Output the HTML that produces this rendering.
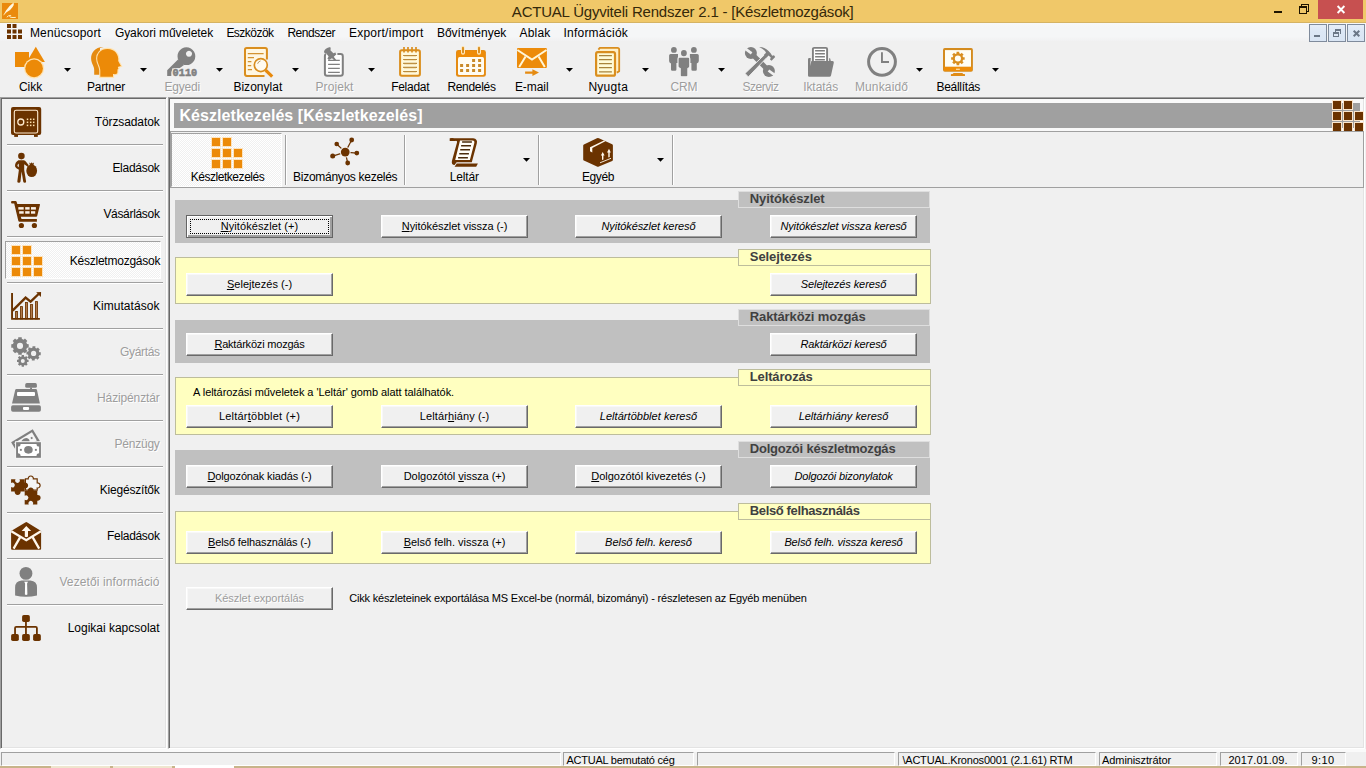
<!DOCTYPE html>
<html lang="hu">
<head>
<meta charset="utf-8">
<title>ACTUAL Ügyviteli Rendszer 2.1 - [Készletmozgások]</title>
<style>
html,body{margin:0;padding:0}
body{width:1366px;height:768px;overflow:hidden;background:#F0F0F0;font-family:"Liberation Sans",sans-serif;position:relative;color:#000}
.sec{position:absolute;left:0;top:0;width:0;height:0}
.sec div,.sec svg,.sec span,.sec button{position:absolute;box-sizing:border-box}
svg{overflow:visible}
.t{white-space:pre}
.dis{color:#9D9D9D;text-shadow:1px 1px 0 #fff}
u{text-decoration:underline;text-underline-offset:1px;text-decoration-thickness:1px}
.sunk2{border:1px solid;border-color:#A0A0A0 #fff #fff #A0A0A0;box-shadow:inset 1px 1px 0 #696969,inset -1px -1px 0 #E3E3E3}
.sunk1{border:1px solid;border-color:#A0A0A0 #fff #fff #A0A0A0}
.btn{background:#F0F0F0;border:1px solid;border-color:#fff #696969 #696969 #fff;box-shadow:inset -1px -1px 0 #A0A0A0,inset 1px 1px 0 #F8F8F8}
.btn.def{border-color:#646464;box-shadow:inset 1px 1px 0 #fff,inset -1px -1px 0 #A0A0A0,inset -2px -2px 0 #A0A0A0}
.gg{background:#C0C0C0}
.gy{background:#FFFFC0;border:1px solid #BDBD9C}
.gt{background:#C0C0C0;border:1px solid #DEDEDE}
.gty{background:#FFFFC0;border:1px solid #BDBD9C}
.chk{background-color:#fff;background-image:linear-gradient(45deg,#F0F0F0 25%,transparent 25%,transparent 75%,#F0F0F0 75%),linear-gradient(45deg,#F0F0F0 25%,transparent 25%,transparent 75%,#F0F0F0 75%);background-size:2px 2px;background-position:0 0,1px 1px}
.vsep{width:2px;border-left:1px solid #A0A0A0;border-right:1px solid #fff}
.hsep{height:2px;border-top:1px solid #A0A0A0;border-bottom:1px solid #fff}
.mdi{background:linear-gradient(#E6EEF8,#DCE7F5 40%,#D9E5F4);border:1px solid #7F8B9C}
</style>
</head>
<body>
<header id="titlebar" class="sec">
<div style="left:0px;top:0px;width:1366px;height:22px;background:#F0C869"></div>
<div style="left:0px;top:22px;width:1366px;height:1px;background:#D5B363"></div>
<svg style="left:2px;top:3px" width="16" height="16" viewBox="0 0 16 16" ><rect width="16" height="16" fill="#EA8A0C"/><path d="M1.8 11.4 L4 7.4 Q7.6 2.6 11.6 -0.4 Q12.4 1.6 10.6 4 Q8.4 7.6 4.6 9.2 Z" fill="#FFF8E0"/><path d="M1.6 12.2 L3.4 9.8" stroke="#FFE9A8" stroke-width="0.8"/><path d="M4.8 14.2 Q6.4 12.2 8.8 12.4 Q7.2 13.6 8.2 14.2 Q11 14.8 13.8 14.4" fill="none" stroke="#FFF0C0" stroke-width="1"/></svg>
<span class="t" style="left:511.85px;top:3px;font-size:15px;line-height:17px;color:#35290A;letter-spacing:-0.212px;">ACTUAL Ügyviteli Rendszer 2.1 - [Készletmozgások]</span>
<div style="left:1274px;top:11px;width:8px;height:2px;background:#1E1400"></div>
<svg style="left:1299px;top:4px" width="10" height="10" viewBox="0 0 10 10" ><g fill="#1E1400" shape-rendering="crispEdges"><rect x="2" y="0" width="8" height="1"/><rect x="2" y="0" width="1" height="2"/><rect x="9" y="0" width="1" height="8"/><rect x="8" y="7" width="2" height="1"/><rect x="0" y="2" width="8" height="2"/><rect x="0" y="2" width="1" height="8"/><rect x="7" y="2" width="1" height="8"/><rect x="0" y="9" width="8" height="1"/></g></svg>
<div style="left:1318px;top:0px;width:45px;height:19px;background:#C75050"></div>
<svg style="left:1337px;top:6px" width="8" height="7" viewBox="0 0 8 7" ><path d="M0.6 0L7.4 7M7.4 0L0.6 7" stroke="#fff" stroke-width="1.9"/></svg>
</header>
<nav id="menubar" class="sec">
<div style="left:0px;top:23px;width:1366px;height:18px;background:linear-gradient(#F7F8F9,#F5F6F7 30%,#F5F6F7 75%,#F1F1F2)"></div>
<svg style="left:7px;top:24px" width="16" height="16" viewBox="0 0 16 16" ><rect x="0" y="0" width="4" height="4" fill="#6B3300"/><rect x="5.5" y="0" width="4" height="4" fill="#6B3300"/><rect x="0" y="5.5" width="4" height="4" fill="#6B3300"/><rect x="5.5" y="5.5" width="4" height="4" fill="#6B3300"/><rect x="11" y="5.5" width="4" height="4" fill="#6B3300"/><rect x="0" y="11" width="4" height="4" fill="#6B3300"/><rect x="5.5" y="11" width="4" height="4" fill="#6B3300"/><rect x="11" y="11" width="4" height="4" fill="#6B3300"/></svg>
<span class="t" style="left:29.90px;top:26px;font-size:12px;line-height:14px;letter-spacing:0.166px;">Menücsoport</span>
<span class="t" style="left:114.90px;top:26px;font-size:12px;line-height:14px;letter-spacing:-0.069px;">Gyakori műveletek</span>
<span class="t" style="left:226.40px;top:26px;font-size:12px;line-height:14px;letter-spacing:-0.520px;">Eszközök</span>
<span class="t" style="left:287.40px;top:26px;font-size:12px;line-height:14px;letter-spacing:-0.457px;">Rendszer</span>
<span class="t" style="left:348.90px;top:26px;font-size:12px;line-height:14px;letter-spacing:0.257px;">Export/import</span>
<span class="t" style="left:436.90px;top:26px;font-size:12px;line-height:14px;letter-spacing:0.007px;">Bővítmények</span>
<span class="t" style="left:519.40px;top:26px;font-size:12px;line-height:14px;letter-spacing:0.234px;">Ablak</span>
<span class="t" style="left:563.40px;top:26px;font-size:12px;line-height:14px;letter-spacing:0.243px;">Információk</span>
<div class="mdi" style="left:1309px;top:24px;width:18px;height:18px;"></div>
<div class="mdi" style="left:1328px;top:24px;width:18px;height:18px;"></div>
<div class="mdi" style="left:1347px;top:24px;width:18px;height:18px;"></div>
<div style="left:1314px;top:35px;width:6px;height:2px;background:#6B7787"></div>
<svg style="left:1333px;top:29px" width="8" height="8" viewBox="0 0 8 8" ><g fill="#6B7787" shape-rendering="crispEdges"><rect x="2" y="0" width="6" height="2"/><rect x="7" y="0" width="1" height="5"/><rect x="2" y="0" width="1" height="3"/><rect x="0" y="3" width="6" height="2"/><rect x="0" y="3" width="1" height="5"/><rect x="5" y="3" width="1" height="5"/><rect x="0" y="7" width="6" height="1"/></g></svg>
<svg style="left:1353px;top:30px" width="7" height="7" viewBox="0 0 7 7" ><path d="M0.7 0.7L6.3 6.3M6.3 0.7L0.7 6.3" stroke="#6B7787" stroke-width="2"/></svg>
</nav>
<div id="toolbar" class="sec">
<div class="tbtn" style="left:0px;top:42px;width:76px;height:54px;">
<svg style="left:15px;top:4px" width="32" height="32" viewBox="0 0 32 32" ><rect x="0" y="6" width="14" height="15" fill="#EC8A08"/>
<path d="M20.8 0.8 L29.9 16 L11.7 16 Z" fill="#EC8A08"/>
<circle cx="19.1" cy="22.4" r="10.1" fill="#FFE3B0"/><circle cx="19.1" cy="22.4" r="8.8" fill="#EC8A08"/></svg>
<span class="t" style="left:18.90px;top:38px;font-size:12px;line-height:14px;letter-spacing:0.027px;">Cikk</span>
<svg style="left:64px;top:26px" width="7" height="4" viewBox="0 0 7 4" ><path d="M0 0H7L3.5 3.8Z" fill="#000"/></svg>
</div>
<div class="tbtn" style="left:76px;top:42px;width:76px;height:54px;">
<svg style="left:15px;top:4px" width="32" height="32" viewBox="0 0 32 32" ><path d="M12.6 1 C4 0.8 0 7 0.1 12.5 C0.3 18 3.2 20 3.2 24 V28.7 H9 V2 Z" fill="#E58B12"/>
<path d="M16.5 2.9 C9.5 2.9 6.2 8 6.2 12.5 C6.2 17.5 9.3 20 9.3 24.5 V30.8 H22 V28 C23.5 28.2 26 28.6 26.3 26.8 L26.5 23.6 L27.4 22.6 L26.8 21.6 L27.2 20.8 L29.9 20 L27.2 15 C28.2 8.5 23.5 2.9 16.5 2.9 Z" fill="#EC8A08" stroke="#FFE3B0" stroke-width="2.2" paint-order="stroke"/></svg>
<span class="t" style="left:10.90px;top:38px;font-size:12px;line-height:14px;letter-spacing:-0.166px;">Partner</span>
<svg style="left:64px;top:26px" width="7" height="4" viewBox="0 0 7 4" ><path d="M0 0H7L3.5 3.8Z" fill="#000"/></svg>
</div>
<div class="tbtn" style="left:152px;top:42px;width:76px;height:54px;">
<svg style="left:15px;top:4px" width="32" height="32" viewBox="0 0 32 32" ><path d="M11 13.5 L0.2 24.3 V29.9 H4.3 V26.5 Q4.6 22.4 9 22.2 H12.5 L17 19 Z" fill="#808080"/>
<path d="M19.4 1.3 a8.9 8.9 0 1 0 0.01 0 Z M22 4.75 a3.05 3.05 0 1 1 -0.01 0 Z" fill="#808080" fill-rule="evenodd"/>
<rect x="5.2" y="22.4" width="26" height="8" fill="#F0F0F0"/>
<text x="5.6" y="29.9" font-family="Liberation Mono, monospace" font-weight="bold" font-size="10.4" fill="#808080" stroke="#808080" stroke-width="0.55" textLength="24.6" lengthAdjust="spacingAndGlyphs">0110</text></svg>
<span class="t dis" style="left:12.40px;top:38px;font-size:12px;line-height:14px;letter-spacing:-0.167px;">Egyedi</span>
<svg style="left:64px;top:26px" width="7" height="4" viewBox="0 0 7 4" ><path d="M0 0H7L3.5 3.8Z" fill="#000"/></svg>
</div>
<div class="tbtn" style="left:228px;top:42px;width:76px;height:54px;">
<svg style="left:15px;top:4px" width="32" height="32" viewBox="0 0 32 32" ><rect x="0.9" y="0.8" width="24.1" height="30.2" rx="2.6" fill="#FDE7C4"/>
<rect x="2" y="1.9" width="21.9" height="28" rx="1.8" fill="#FFF7E2" stroke="#D98E1F" stroke-width="2"/>
<rect x="23" y="13.5" width="3" height="18" fill="#F0F0F0"/><rect x="21.5" y="27.5" width="4" height="4" fill="#F0F0F0"/>
<g stroke="#D39331" stroke-width="1.3"><path d="M4.8 7.6H20.6M4.8 11.6H11M4.8 15.6H8.4M4.8 19.6H8.2M4.8 23.6H9"/></g>
<circle cx="17.8" cy="19.1" r="6.5" fill="#FFFBF0" stroke="#D98E1F" stroke-width="1.7"/>
<path d="M14.6 17.8 Q15.3 15.4 17.6 14.9" fill="none" stroke="#9A7A3A" stroke-width="0.7"/>
<path d="M22.6 24.2 L29.2 30.6" stroke="#E8890C" stroke-width="3.2" stroke-linecap="butt"/></svg>
<span class="t" style="left:5.40px;top:38px;font-size:12px;line-height:14px;letter-spacing:0.027px;">Bizonylat</span>
<svg style="left:64px;top:26px" width="7" height="4" viewBox="0 0 7 4" ><path d="M0 0H7L3.5 3.8Z" fill="#000"/></svg>
</div>
<div class="tbtn" style="left:304px;top:42px;width:76px;height:54px;">
<svg style="left:15px;top:4px" width="32" height="32" viewBox="0 0 32 32" ><rect x="5.9" y="8.1" width="17.9" height="21.7" rx="2.2" fill="#fff" stroke="#808080" stroke-width="2"/>
<rect x="7.2" y="6" width="11.2" height="3.6" fill="#F0F0F0"/><rect x="7" y="9" width="12" height="3" fill="#fff"/>
<g stroke="#808080" stroke-width="1.3"><path d="M9.1 14.4H20.8M9.1 18.3H20.8M9.1 22.3H20.8M9.1 26.3H20.8"/></g>
<path d="M5 5.4 Q5.8 2.2 11.2 0.9 Q12.2 2.6 11.4 4.2 L14.4 7.2 L16.4 6.6 L17.2 8.4 L14.8 10.8 L17.2 14 L16 15 L13 12.2 L10 14 L8.4 12.6 L9.6 10.4 L7.2 7.2 Q5.2 7.8 5 5.4 Z" fill="#808080"/></svg>
<span class="t dis" style="left:11.40px;top:38px;font-size:12px;line-height:14px;letter-spacing:0.120px;">Projekt</span>
<svg style="left:64px;top:26px" width="7" height="4" viewBox="0 0 7 4" ><path d="M0 0H7L3.5 3.8Z" fill="#000"/></svg>
</div>
<div class="tbtn" style="left:380px;top:42px;width:61px;height:54px;">
<svg style="left:15px;top:4px" width="32" height="32" viewBox="0 0 32 32" ><rect x="4.1" y="3.2" width="21.8" height="27.6" rx="2.6" fill="#FDE7C4"/>
<rect x="5.1" y="4.2" width="19.8" height="25.6" rx="1.8" fill="#FFF9DC" stroke="#D98E1F" stroke-width="2"/>
<g stroke="#D98E1F" stroke-width="1.7"><path d="M9 1V6.6M13 1V6.6M17 1V6.6M21 1V6.6"/></g>
<g stroke="#B98A3C" stroke-width="1.1"><path d="M8.1 9.5H22M8.1 13.5H22M8.1 17.4H22M8.1 21.4H22M8.1 25.5H22"/></g>
<g stroke="#F3DCA8" stroke-width="0.8"><path d="M9 10.5H21M9 14.5H21M9 18.4H21M9 22.4H21M9 26.5H21"/></g></svg>
<span class="t" style="left:11.15px;top:38px;font-size:12px;line-height:14px;letter-spacing:-0.262px;">Feladat</span>
</div>
<div class="tbtn" style="left:441px;top:42px;width:61px;height:54px;">
<svg style="left:15px;top:4px" width="32" height="32" viewBox="0 0 32 32" ><rect x="0" y="3.9" width="29.9" height="26.9" rx="2.4" fill="#E58B12"/>
<rect x="1" y="4.9" width="27.9" height="7" rx="1.5" fill="#EE8C08"/>
<rect x="2" y="11.1" width="26" height="17.9" rx="1.6" fill="#FFFCF2"/>
<g fill="#C98A28"><rect x="16.1" y="13" width="3" height="3"/><rect x="22.1" y="13" width="3" height="3"/><rect x="4.1" y="18" width="3" height="3"/><rect x="10.1" y="18" width="3" height="3"/><rect x="16.1" y="18" width="3" height="3"/><rect x="22.1" y="18" width="3" height="3"/><rect x="4.1" y="23" width="3" height="3"/><rect x="10.1" y="23" width="3" height="3"/><rect x="16.1" y="23" width="3" height="3"/><rect x="22.1" y="23" width="3" height="3"/></g>
<g stroke="#FFE9BE" stroke-width="4" stroke-linecap="round"><path d="M7 2V6.8M23 2V6.8"/></g>
<g stroke="#D98E1F" stroke-width="1.9" stroke-linecap="round"><path d="M7 1.8V6.4M23 1.8V6.4"/></g></svg>
<span class="t" style="left:6.40px;top:38px;font-size:12px;line-height:14px;letter-spacing:-0.313px;">Rendelés</span>
</div>
<div class="tbtn" style="left:502px;top:42px;width:76px;height:54px;">
<svg style="left:15px;top:4px" width="32" height="32" viewBox="0 0 32 32" ><rect x="0" y="2" width="29.9" height="19.9" rx="1" fill="#EC8B0A"/>
<path d="M0.4 4 L15 13.6 L29.5 4" fill="none" stroke="#FFF6D8" stroke-width="2"/>
<path d="M2.2 21 L8.6 10.4 M27.8 21 L21.6 10.4" stroke="#FFF6D8" stroke-width="2"/>
<path d="M8.1 25.4 H15.4 V23.3 L22 26.6 L15.4 29.9 V27.8 H8.1 Z" fill="#E58B12"/></svg>
<span class="t" style="left:12.90px;top:38px;font-size:12px;line-height:14px;letter-spacing:-0.053px;">E-mail</span>
<svg style="left:64px;top:26px" width="7" height="4" viewBox="0 0 7 4" ><path d="M0 0H7L3.5 3.8Z" fill="#000"/></svg>
</div>
<div class="tbtn" style="left:578px;top:42px;width:76px;height:54px;">
<svg style="left:15px;top:4px" width="32" height="32" viewBox="0 0 32 32" ><path d="M4.6 5 L6.8 1.9 H24.4 Q26.2 1.9 26.2 3.7 V25.2 L22.6 27.4 V5 Z" fill="#FFEFC6"/>
<path d="M5.4 3.6 L6.8 1.9 H24.4 Q26.2 1.9 26.2 3.7 V25.2 L23.8 26.6" fill="none" stroke="#D98E1F" stroke-width="1.8" stroke-linejoin="round"/>
<rect x="2" y="5" width="21.1" height="25.8" rx="2.6" fill="#FDE7C4"/>
<rect x="3.1" y="6.1" width="18.9" height="23.6" rx="1.8" fill="#FFFBD8" stroke="#D98E1F" stroke-width="2.2"/>
<g stroke="#A8843C" stroke-width="1.3"><path d="M6 9.7H18.9M6 13.7H18.9M6 17.7H18.9M6 21.7H18.9M6 25.8H18.9"/></g></svg>
<span class="t" style="left:10.40px;top:38px;font-size:12px;line-height:14px;letter-spacing:0.278px;">Nyugta</span>
<svg style="left:64px;top:26px" width="7" height="4" viewBox="0 0 7 4" ><path d="M0 0H7L3.5 3.8Z" fill="#000"/></svg>
</div>
<div class="tbtn" style="left:654px;top:42px;width:76px;height:54px;">
<svg style="left:15px;top:4px" width="32" height="32" viewBox="0 0 32 32" ><g fill="#808080"><circle cx="4.9" cy="3.9" r="2.9"/><path d="M1.6 8.1 H9 V17 H7.4 V23.4 Q7.4 24.7 6.1 24.7 H3.3 Q2 24.7 2 23.4 V17.6 Q0.1 16.6 0.1 15 V9.6 Q0.1 8.1 1.6 8.1 Z"/>
<circle cx="24.9" cy="3.9" r="2.9"/><path d="M28.3 8.1 H20.9 V17 H22.4 V23.4 Q22.4 24.7 23.7 24.7 H26.5 Q27.8 24.7 27.8 23.4 V17.6 Q29.8 16.6 29.8 15 V9.6 Q29.8 8.1 28.3 8.1 Z"/></g>
<g fill="#808080" stroke="#F0F0F0" stroke-width="1.2"><path d="M10.6 11.1 H19.2 Q20.8 11.1 20.8 12.7 V20.6 Q20.8 22 18.9 22.6 V29.4 Q18.9 30.8 17.5 30.8 H12.6 Q11.2 30.8 11.2 29.4 V22.6 Q9 22 9 20.6 V12.7 Q9 11.1 10.6 11.1 Z"/></g>
<ellipse cx="14.9" cy="7.1" rx="2.9" ry="3.2" fill="#808080"/></svg>
<span class="t dis" style="left:16.40px;top:38px;font-size:12px;line-height:14px;letter-spacing:-0.126px;">CRM</span>
<svg style="left:64px;top:26px" width="7" height="4" viewBox="0 0 7 4" ><path d="M0 0H7L3.5 3.8Z" fill="#000"/></svg>
</div>
<div class="tbtn" style="left:730px;top:42px;width:61px;height:54px;">
<svg style="left:15px;top:4px" width="32" height="32" viewBox="0 0 32 32" ><path d="M7 8 L24 25" stroke="#808080" stroke-width="4.8"/>
<circle cx="5.9" cy="6.9" r="6" fill="#808080"/><circle cx="23.9" cy="25.1" r="6" fill="#808080"/>
<path d="M-0.5 2.2 L6.6 7.4" stroke="#F0F0F0" stroke-width="2.7"/><path d="M23.5 24.5 L30.5 29.6" stroke="#F0F0F0" stroke-width="2.7"/>
<path d="M0 27.4 L3.3 30.9 L22.2 11.2 L19.6 8.6 Z" fill="#808080" stroke="#F0F0F0" stroke-width="0.9"/>
<path d="M14.2 1 Q20.4 0.6 25.6 7.2 L27.2 9.8 L29 9.2 L30.2 11 L26.6 14.7 L25 13.4 L25.8 11.6 L23.6 9.6 L21.6 11.6 L19 8.8 L21 6.8 Q19.4 3.4 14.2 1 Z" fill="#808080"/></svg>
<span class="t dis" style="left:12.40px;top:38px;font-size:12px;line-height:14px;letter-spacing:-0.449px;">Szerviz</span>
</div>
<div class="tbtn" style="left:791px;top:42px;width:61px;height:54px;">
<svg style="left:15px;top:4px" width="32" height="32" viewBox="0 0 32 32" ><rect x="6.9" y="1.9" width="14.2" height="16" rx="1.2" fill="#fff" stroke="#808080" stroke-width="1.9"/>
<g stroke="#808080" stroke-width="1.5"><path d="M9.1 4.8H18.9M9.1 7.8H18.9M9.1 10.8H18.9M9.1 13.7H18.9"/></g>
<path d="M2 13.4 Q2 12.1 3.3 12.1 H4.8 L4 20 L5.4 15.1 H26.4 Q28.2 15.1 27.8 16.8 L25 29.6 Q24.7 30.8 23.4 30.8 H3.4 Q2 30.8 2 29.4 Z" fill="#808080"/>
<path d="M23.1 15.3 V12.6 L24 12 L24.9 15.3 Z" fill="#808080"/></svg>
<span class="t dis" style="left:12.15px;top:38px;font-size:12px;line-height:14px;letter-spacing:-0.058px;">Iktatás</span>
</div>
<div class="tbtn" style="left:852px;top:42px;width:76px;height:54px;">
<svg style="left:15px;top:4px" width="32" height="32" viewBox="0 0 32 32" ><circle cx="15" cy="15.85" r="13.4" fill="none" stroke="#808080" stroke-width="3"/>
<path d="M14.95 6.2 V16.05 H22" fill="none" stroke="#808080" stroke-width="1.9"/></svg>
<span class="t dis" style="left:2.90px;top:38px;font-size:12px;line-height:14px;letter-spacing:0.146px;">Munkaidő</span>
<svg style="left:64px;top:26px" width="7" height="4" viewBox="0 0 7 4" ><path d="M0 0H7L3.5 3.8Z" fill="#000"/></svg>
</div>
<div class="tbtn" style="left:928px;top:42px;width:76px;height:54px;">
<svg style="left:15px;top:4px" width="32" height="32" viewBox="0 0 32 32" ><rect x="0" y="2.1" width="29.9" height="23.6" rx="1.8" fill="#D48B1E"/>
<rect x="1" y="20.7" width="27.9" height="4.2" fill="#EE8C08"/>
<rect x="2" y="4.1" width="26" height="16.6" fill="#FFFDF4"/>
<rect x="13" y="22.7" width="3.8" height="1.1" fill="#FFE9BE"/>
<path d="M10.6 27 H19.3 L20.2 28 H21.4 Q22 28 22 28.6 V29.9 H7.9 V28.6 Q7.9 28 8.5 28 H9.7 Z" fill="#E08C17"/>
<path d="M19.49 15.15 L20.65 16.32 L18.75 18.23 L17.57 17.08 A5.30 5.30 0 0 1 16.27 17.62 L16.26 19.26 L13.57 19.27 L13.56 17.63 A5.30 5.30 0 0 1 12.25 17.09 L11.08 18.25 L9.17 16.35 L10.32 15.17 A5.30 5.30 0 0 1 9.78 13.87 L8.14 13.86 L8.13 11.17 L9.77 11.16 A5.30 5.30 0 0 1 10.31 9.85 L9.15 8.68 L11.05 6.77 L12.23 7.92 A5.30 5.30 0 0 1 13.53 7.38 L13.54 5.74 L16.23 5.73 L16.24 7.37 A5.30 5.30 0 0 1 17.55 7.91 L18.72 6.75 L20.63 8.65 L19.48 9.83 A5.30 5.30 0 0 1 20.02 11.13 L21.66 11.14 L21.67 13.83 L20.03 13.84 A5.30 5.30 0 0 1 19.49 15.15 Z M11.85 12.50 a3.05 3.05 0 1 0 6.10 0 a3.05 3.05 0 1 0 -6.10 0 Z" fill="#D98E1F" fill-rule="evenodd"/></svg>
<span class="t" style="left:8.40px;top:38px;font-size:12px;line-height:14px;letter-spacing:-0.259px;">Beállítás</span>
<svg style="left:64px;top:26px" width="7" height="4" viewBox="0 0 7 4" ><path d="M0 0H7L3.5 3.8Z" fill="#000"/></svg>
</div>
</div>
<aside id="sidebar" class="sec">
<div class="sunk2" style="left:0px;top:97px;width:167px;height:652px;"></div>
<div class="sitem" style="left:5px;top:102px;width:157px;height:38px;">
<svg style="left:6px;top:5px" width="32" height="32" viewBox="0 0 32 32" ><rect x="0" y="0" width="30.2" height="28" rx="2" fill="#6B3300"/><rect x="3.2" y="27" width="3.8" height="2.9" fill="#6B3300"/><rect x="23" y="27" width="3.8" height="2.9" fill="#6B3300"/>
<rect x="3.3" y="3.2" width="23.4" height="22.8" rx="1.8" fill="none" stroke="#FFEBCF" stroke-width="1.1"/>
<circle cx="9.8" cy="15" r="3" fill="none" stroke="#FFEBCF" stroke-width="1.3"/>
<g fill="#FFE3B0"><rect x="15.75" y="11.55" width="1.5" height="1.5"/><rect x="18.95" y="11.55" width="1.5" height="1.5"/><rect x="21.95" y="11.55" width="1.5" height="1.5"/><rect x="15.75" y="14.55" width="1.5" height="1.5"/><rect x="18.95" y="14.55" width="1.5" height="1.5"/><rect x="21.95" y="14.55" width="1.5" height="1.5"/><rect x="15.75" y="17.65" width="1.5" height="1.5"/><rect x="18.95" y="17.65" width="1.5" height="1.5"/><rect x="21.95" y="17.65" width="1.5" height="1.5"/></g></svg>
<span class="t" style="left:89.80px;top:13px;font-size:12px;line-height:14px;letter-spacing:-0.112px;">Törzsadatok</span>
</div>
<div class="hsep" style="left:7px;top:144px;width:156px;height:2px;"></div>
<div class="sitem" style="left:5px;top:148px;width:157px;height:38px;">
<svg style="left:6px;top:5px" width="32" height="32" viewBox="0 0 32 32" ><g fill="#6B3300"><circle cx="10.4" cy="3.1" r="3.3"/>
<path d="M7.4 7.2 H12.8 Q14.2 7.4 15 8.8 L17.8 12.2 L16.8 13.8 L13.2 11.2 V17 L15.1 28.6 Q15.2 29.8 13.7 29.8 Q12.5 29.8 12.2 28.6 L10.6 18.6 L9.5 28.6 Q9.3 29.8 7.9 29.8 Q6.3 29.8 6.3 28.6 L7.9 16.8 Q4.6 15.6 4 13.2 Q3.8 9.4 7.4 7.2 Z M7.8 10.4 Q6.2 11.8 6.4 13 L7.8 14.2 Z" fill-rule="evenodd"/>
<ellipse cx="20.7" cy="17.7" rx="5.4" ry="6.3"/><path d="M18.2 9.4 L19.8 10.6 L20.7 9.2 L21.6 10.6 L23 9.4 L22.4 12.4 H19 Z"/></g></svg>
<span class="t" style="left:107.40px;top:13px;font-size:12px;line-height:14px;letter-spacing:-0.272px;">Eladások</span>
</div>
<div class="hsep" style="left:7px;top:190px;width:156px;height:2px;"></div>
<div class="sitem" style="left:5px;top:194px;width:157px;height:38px;">
<svg style="left:6px;top:5px" width="32" height="32" viewBox="0 0 32 32" ><path d="M0.1 3 Q0.1 2.1 1 2.1 H4.6 Q5.4 2.1 5.7 3 L6.3 4.9 H28.3 Q29.2 4.9 29 5.8 L26.2 17 Q26 17.7 25.2 17.7 H9.8 L10.5 20.1 H25.9 V22.7 H8.4 Q7.6 22.7 7.3 21.8 L3.2 4.5 H1 Q0.1 4.5 0.1 3.6 Z" fill="#6B3300"/>
<g fill="#FBF1E6"><rect x="7.3" y="8.1" width="5.4" height="2.5"/><rect x="14.2" y="8.1" width="4.4" height="2.5"/><rect x="20" y="8.1" width="4.9" height="2.5"/>
<rect x="8.2" y="12.2" width="4.5" height="2.5"/><rect x="14.2" y="12.2" width="4.4" height="2.5"/><rect x="20" y="12.2" width="4.2" height="2.5"/></g>
<circle cx="10.4" cy="26.5" r="2.6" fill="#6B3300"/><circle cx="23.4" cy="26.5" r="2.6" fill="#6B3300"/></svg>
<span class="t" style="left:98.40px;top:13px;font-size:12px;line-height:14px;letter-spacing:-0.317px;">Vásárlások</span>
</div>
<div class="hsep" style="left:7px;top:236px;width:156px;height:2px;"></div>
<div class="sunk1 chk" style="left:5px;top:241px;width:156px;height:38px;">
<svg style="left:5px;top:3px" width="32" height="32" viewBox="0 0 32 32" ><rect x="0" y="0" width="10" height="10" fill="#FDE3BD"/><rect x="1" y="1" width="8" height="8" fill="#EC8A08"/><rect x="11" y="0" width="10" height="10" fill="#FDE3BD"/><rect x="12" y="1" width="8" height="8" fill="#EC8A08"/><rect x="0" y="11" width="10" height="10" fill="#FDE3BD"/><rect x="1" y="12" width="8" height="8" fill="#EC8A08"/><rect x="11" y="11" width="10" height="10" fill="#FDE3BD"/><rect x="12" y="12" width="8" height="8" fill="#EC8A08"/><rect x="22" y="11" width="10" height="10" fill="#FDE3BD"/><rect x="23" y="12" width="8" height="8" fill="#EC8A08"/><rect x="0" y="22" width="10" height="10" fill="#FDE3BD"/><rect x="1" y="23" width="8" height="8" fill="#EC8A08"/><rect x="11" y="22" width="10" height="10" fill="#FDE3BD"/><rect x="12" y="23" width="8" height="8" fill="#EC8A08"/><rect x="22" y="22" width="10" height="10" fill="#FDE3BD"/><rect x="23" y="23" width="8" height="8" fill="#EC8A08"/></svg>
<span class="t" style="left:63.80px;top:12px;font-size:12px;line-height:14px;letter-spacing:-0.243px;">Készletmozgások</span>
</div>
<div class="hsep" style="left:7px;top:282px;width:156px;height:2px;"></div>
<div class="sitem" style="left:5px;top:286px;width:157px;height:38px;">
<svg style="left:6px;top:5px" width="32" height="32" viewBox="0 0 32 32" ><g fill="#B27B4C" stroke="#6B3300" stroke-width="0.85"><rect x="4.6" y="20.5" width="1.9" height="7.4"/><rect x="9.5" y="15.6" width="2" height="12.3"/><rect x="14.5" y="11.5" width="2" height="16.4"/><rect x="19.5" y="13.6" width="2.1" height="14.3"/><rect x="24.5" y="10.6" width="2" height="17.3"/></g>
<path d="M1.05 2.1 V27.85 H28.9" fill="none" stroke="#6B3300" stroke-width="1.9"/>
<path d="M1.6 19.6 L14.6 6.6 L19.6 10.6 L27.6 3" fill="none" stroke="#6B3300" stroke-width="2.4" stroke-linejoin="miter"/>
<path d="M25.2 1.2 L30.1 0.9 L29.9 5.9 Z" fill="#6B3300"/></svg>
<span class="t" style="left:87.90px;top:13px;font-size:12px;line-height:14px;letter-spacing:0.061px;">Kimutatások</span>
</div>
<div class="hsep" style="left:7px;top:328px;width:156px;height:2px;"></div>
<div class="sitem" style="left:5px;top:332px;width:157px;height:38px;">
<svg style="left:6px;top:5px" width="32" height="32" viewBox="0 0 32 32" ><path d="M7.15 1.94 L7.26 0.17 L10.74 0.17 L10.85 1.94 A7.20 7.20 0 0 1 12.62 2.67 L13.94 1.50 L16.40 3.96 L15.23 5.28 A7.20 7.20 0 0 1 15.96 7.05 L17.73 7.16 L17.73 10.64 L15.96 10.75 A7.20 7.20 0 0 1 15.23 12.52 L16.40 13.84 L13.94 16.30 L12.62 15.13 A7.20 7.20 0 0 1 10.85 15.86 L10.74 17.63 L7.26 17.63 L7.15 15.86 A7.20 7.20 0 0 1 5.38 15.13 L4.06 16.30 L1.60 13.84 L2.77 12.52 A7.20 7.20 0 0 1 2.04 10.75 L0.27 10.64 L0.27 7.16 L2.04 7.05 A7.20 7.20 0 0 1 2.77 5.28 L1.60 3.96 L4.06 1.50 L5.38 2.67 A7.20 7.20 0 0 1 7.15 1.94 Z M5.95 8.90 a3.05 3.05 0 1 0 6.10 0 a3.05 3.05 0 1 0 -6.10 0 Z" fill="#808080" fill-rule="evenodd"/><path d="M21.40 10.73 L21.54 9.18 L24.38 9.32 L24.36 10.88 A5.80 5.80 0 0 1 25.76 11.54 L26.95 10.54 L28.86 12.65 L27.75 13.74 A5.80 5.80 0 0 1 28.27 15.20 L29.82 15.34 L29.68 18.18 L28.12 18.16 A5.80 5.80 0 0 1 27.46 19.56 L28.46 20.75 L26.35 22.66 L25.26 21.55 A5.80 5.80 0 0 1 23.80 22.07 L23.66 23.62 L20.82 23.48 L20.84 21.92 A5.80 5.80 0 0 1 19.44 21.26 L18.25 22.26 L16.34 20.15 L17.45 19.06 A5.80 5.80 0 0 1 16.93 17.60 L15.38 17.46 L15.52 14.62 L17.08 14.64 A5.80 5.80 0 0 1 17.74 13.24 L16.74 12.05 L18.85 10.14 L19.94 11.25 A5.80 5.80 0 0 1 21.40 10.73 Z M20.00 16.40 a2.60 2.60 0 1 0 5.20 0 a2.60 2.60 0 1 0 -5.20 0 Z" fill="#808080" fill-rule="evenodd"/><path d="M10.62 19.45 L10.65 18.11 L12.95 18.11 L12.98 19.45 A4.60 4.60 0 0 1 14.11 19.92 L15.08 18.99 L16.71 20.62 L15.78 21.59 A4.60 4.60 0 0 1 16.25 22.72 L17.59 22.75 L17.59 25.05 L16.25 25.08 A4.60 4.60 0 0 1 15.78 26.21 L16.71 27.18 L15.08 28.81 L14.11 27.88 A4.60 4.60 0 0 1 12.98 28.35 L12.95 29.69 L10.65 29.69 L10.62 28.35 A4.60 4.60 0 0 1 9.49 27.88 L8.52 28.81 L6.89 27.18 L7.82 26.21 A4.60 4.60 0 0 1 7.35 25.08 L6.01 25.05 L6.01 22.75 L7.35 22.72 A4.60 4.60 0 0 1 7.82 21.59 L6.89 20.62 L8.52 18.99 L9.49 19.92 A4.60 4.60 0 0 1 10.62 19.45 Z M9.80 23.90 a2.00 2.00 0 1 0 4.00 0 a2.00 2.00 0 1 0 -4.00 0 Z" fill="#808080" fill-rule="evenodd"/></svg>
<span class="t dis" style="left:115.10px;top:13px;font-size:12px;line-height:14px;letter-spacing:-0.359px;">Gyártás</span>
</div>
<div class="hsep" style="left:7px;top:374px;width:156px;height:2px;"></div>
<div class="sitem" style="left:5px;top:378px;width:157px;height:38px;">
<svg style="left:6px;top:5px" width="32" height="32" viewBox="0 0 32 32" ><g fill="#808080"><rect x="14.2" y="0.1" width="11.7" height="4.7" rx="1.6"/><rect x="19.1" y="4.5" width="1.9" height="2"/>
<path d="M5.4 6.1 H24.8 Q25.8 6.1 26 7 L28.9 20.6 H1 L4.2 7 Q4.4 6.1 5.4 6.1 Z"/>
<rect x="0.1" y="22.2" width="29.8" height="6.6" rx="1.8"/></g>
<rect x="6" y="9.1" width="18" height="3.8" rx="0.9" fill="#fff"/><rect x="12" y="24.1" width="6.1" height="2.8" rx="0.8" fill="#fff"/></svg>
<span class="t dis" style="left:92.10px;top:13px;font-size:12px;line-height:14px;letter-spacing:-0.139px;">Házipénztár</span>
</div>
<div class="hsep" style="left:7px;top:420px;width:156px;height:2px;"></div>
<div class="sitem" style="left:5px;top:424px;width:157px;height:38px;">
<svg style="left:6px;top:5px" width="32" height="32" viewBox="0 0 32 32" ><g transform="translate(0.1,13.3) rotate(-31.2)"><rect x="0" y="0" width="25.3" height="14" fill="#808080"/><rect x="2.3" y="2.3" width="20.7" height="9.4" fill="#F6F6F6"/>
<ellipse cx="12.6" cy="7" rx="4.2" ry="3.4" fill="#808080"/><rect x="18.9" y="6" width="1.9" height="1.9" fill="#808080"/><rect x="4.4" y="6" width="1.9" height="1.9" fill="#808080"/></g>
<rect x="4.1" y="12.2" width="26.8" height="17.6" fill="#F4F4F4"/>
<rect x="5.1" y="13.2" width="24.8" height="15.6" fill="#808080"/>
<path d="M9.6 15 H25.5 A2.6 2.6 0 0 0 28.1 17.6 V24.3 A2.6 2.6 0 0 0 25.5 26.9 H9.6 A2.6 2.6 0 0 0 7 24.3 V17.6 A2.6 2.6 0 0 0 9.6 15 Z" fill="#fff"/>
<ellipse cx="17.4" cy="20.85" rx="4.3" ry="3.85" fill="#808080"/><rect x="8.9" y="19.9" width="1.9" height="1.9" fill="#808080"/><rect x="23.9" y="19.9" width="1.9" height="1.9" fill="#808080"/></svg>
<span class="t dis" style="left:109.60px;top:13px;font-size:12px;line-height:14px;letter-spacing:-0.243px;">Pénzügy</span>
</div>
<div class="hsep" style="left:7px;top:466px;width:156px;height:2px;"></div>
<div class="sitem" style="left:5px;top:470px;width:157px;height:38px;">
<svg style="left:6px;top:5px" width="32" height="32" viewBox="0 0 32 32" ><path d="M14.40 3.90 L17.22 3.90 A2.60 2.60 0 1 1 22.38 3.90 L26.20 3.90 L26.20 7.82 A2.60 2.60 0 1 1 26.20 12.98 L26.20 15.20 L14.40 15.20 L14.40 3.90 Z" fill="#F4F4F4" stroke="#6B3300" stroke-width="1.2"/><g fill="#6B3300"><path d="M0.10 4.20 L4.48 4.20 A2.40 2.40 0 1 0 8.52 4.20 L13.70 4.20 L13.70 7.43 A3.00 3.00 0 1 1 13.70 13.37 L13.70 16.60 L9.62 16.60 A3.00 3.00 0 1 1 3.68 16.60 L0.10 16.60 L0.10 12.12 A2.40 2.40 0 1 0 0.10 8.08 L0.10 4.20 Z"/><path d="M13.70 15.70 L16.93 15.70 A2.90 2.90 0 1 1 22.67 15.70 L26.30 15.70 L26.30 19.93 A2.90 2.90 0 1 1 26.30 25.67 L26.30 29.50 L21.82 29.50 A2.40 2.40 0 1 0 17.78 29.50 L13.70 29.50 L13.70 24.72 A2.40 2.40 0 1 0 13.70 20.68 L13.70 15.70 Z"/></g></svg>
<span class="t" style="left:94.80px;top:13px;font-size:12px;line-height:14px;letter-spacing:-0.204px;">Kiegészítők</span>
</div>
<div class="hsep" style="left:7px;top:512px;width:156px;height:2px;"></div>
<div class="sitem" style="left:5px;top:516px;width:157px;height:38px;">
<svg style="left:6px;top:5px" width="32" height="32" viewBox="0 0 32 32" ><path d="M14.3 1.4 Q15.3 0.6 16.3 1.4 L30.1 10 V27.8 Q30.1 28.8 29.1 28.8 H1.1 Q0.1 28.8 0.1 27.8 V10 Z" fill="#6B3300"/>
<path d="M0.3 10.3 L15.3 19.2 L29.9 10.3" fill="none" stroke="#FFF8EC" stroke-width="2.3"/>
<path d="M2.6 27.6 L9.2 16.2 M28.2 27.6 L21.6 16.2" stroke="#FFF8EC" stroke-width="2.3"/>
<path d="M15.3 5 L20.2 10 H17 V15.4 Q15.3 16.4 13.8 15.4 V10 H10.6 Z" fill="#FFF8EC"/></svg>
<span class="t" style="left:102.10px;top:13px;font-size:12px;line-height:14px;letter-spacing:-0.319px;">Feladások</span>
</div>
<div class="hsep" style="left:7px;top:558px;width:156px;height:2px;"></div>
<div class="sitem" style="left:5px;top:562px;width:157px;height:38px;">
<svg style="left:6px;top:5px" width="32" height="32" viewBox="0 0 32 32" ><circle cx="14.95" cy="6.4" r="6.45" fill="#808080"/>
<path d="M4.1 28.6 V20.6 Q4.1 14.2 10.6 13.6 H19.4 Q26 14.2 26 20.6 V28.6 Q20 29.9 15 29.8 Q10 29.9 4.1 28.6 Z" fill="#808080"/>
<path d="M13.2 14.7 H17 L16.1 16.6 L16.4 27.6 Q15.2 28.4 13.9 27.6 L14.1 16.6 Z" fill="#fff"/></svg>
<span class="t dis" style="left:54.40px;top:13px;font-size:12px;line-height:14px;letter-spacing:0.119px;">Vezetői információ</span>
</div>
<div class="hsep" style="left:7px;top:604px;width:156px;height:2px;"></div>
<div class="sitem" style="left:5px;top:608px;width:157px;height:38px;">
<svg style="left:6px;top:5px" width="32" height="32" viewBox="0 0 32 32" ><g fill="#6B3300"><rect x="11.1" y="2" width="7.75" height="6.9" rx="1.7"/><rect x="0.1" y="21.1" width="7.75" height="6.8" rx="1.7"/><rect x="11.1" y="21.1" width="7.75" height="6.8" rx="1.7"/><rect x="22.1" y="21.1" width="7.75" height="6.8" rx="1.7"/></g>
<path d="M14.95 8 V22 M4.05 22 V15.1 Q4.05 13.9 5.25 13.9 H24.7 Q25.9 13.9 25.9 15.1 V22" fill="none" stroke="#6B3300" stroke-width="1.8"/></svg>
<span class="t" style="left:62.70px;top:13px;font-size:12px;line-height:14px;letter-spacing:-0.010px;">Logikai kapcsolat</span>
</div>
</aside>
<main id="main" class="sec">
<div class="sunk2" style="left:168px;top:97px;width:1197px;height:652px;"></div>
<div style="left:170px;top:99px;width:1193px;height:32px;background:#F9F9F9"></div>
<div style="left:174px;top:103px;width:1186px;height:25px;background:#A0A0A0"></div>
<span class="t" style="left:179.40px;top:107px;font-size:16px;line-height:17px;font-weight:bold;color:#fff;letter-spacing:0.070px;">Készletkezelés [Készletkezelés]</span>
<svg style="left:1332px;top:100px" width="32" height="32" viewBox="0 0 32 32" ><rect x="0" y="0" width="10" height="10" fill="#FBE6CC"/><rect x="1" y="1" width="8" height="8" fill="#6B3300"/><rect x="11" y="0" width="10" height="10" fill="#FBE6CC"/><rect x="12" y="1" width="8" height="8" fill="#6B3300"/><rect x="0" y="11" width="10" height="10" fill="#FBE6CC"/><rect x="1" y="12" width="8" height="8" fill="#6B3300"/><rect x="11" y="11" width="10" height="10" fill="#FBE6CC"/><rect x="12" y="12" width="8" height="8" fill="#6B3300"/><rect x="22" y="11" width="10" height="10" fill="#FBE6CC"/><rect x="23" y="12" width="8" height="8" fill="#6B3300"/><rect x="0" y="22" width="10" height="10" fill="#FBE6CC"/><rect x="1" y="23" width="8" height="8" fill="#6B3300"/><rect x="11" y="22" width="10" height="10" fill="#FBE6CC"/><rect x="12" y="23" width="8" height="8" fill="#6B3300"/><rect x="22" y="22" width="10" height="10" fill="#FBE6CC"/><rect x="23" y="23" width="8" height="8" fill="#6B3300"/></svg>
<div style="left:170px;top:131px;width:1194px;height:57px;border:1px solid #A0A0A0;border-left-color:#A0A0A0"></div>
<div class="sunk1 chk" style="left:171px;top:133px;width:111px;height:54px;"></div>
<svg style="left:211px;top:137px" width="32" height="32" viewBox="0 0 32 32" ><rect x="0" y="0" width="10" height="10" fill="#FDE3BD"/><rect x="1" y="1" width="8" height="8" fill="#EC8A08"/><rect x="11" y="0" width="10" height="10" fill="#FDE3BD"/><rect x="12" y="1" width="8" height="8" fill="#EC8A08"/><rect x="0" y="11" width="10" height="10" fill="#FDE3BD"/><rect x="1" y="12" width="8" height="8" fill="#EC8A08"/><rect x="11" y="11" width="10" height="10" fill="#FDE3BD"/><rect x="12" y="12" width="8" height="8" fill="#EC8A08"/><rect x="22" y="11" width="10" height="10" fill="#FDE3BD"/><rect x="23" y="12" width="8" height="8" fill="#EC8A08"/><rect x="0" y="22" width="10" height="10" fill="#FDE3BD"/><rect x="1" y="23" width="8" height="8" fill="#EC8A08"/><rect x="11" y="22" width="10" height="10" fill="#FDE3BD"/><rect x="12" y="23" width="8" height="8" fill="#EC8A08"/><rect x="22" y="22" width="10" height="10" fill="#FDE3BD"/><rect x="23" y="23" width="8" height="8" fill="#EC8A08"/></svg>
<span class="t" style="left:190.65px;top:170px;font-size:12px;line-height:14px;letter-spacing:-0.453px;">Készletkezelés</span>
<div class="vsep" style="left:285px;top:135px;width:2px;height:50px;"></div>
<svg style="left:329px;top:137px" width="32" height="32" viewBox="0 0 32 32" ><g stroke="#6B3300" stroke-width="1.2"><path d="M16.25 15.1 L22.7 3M16.25 15.1 L7.7 7M16.25 15.1 L3.7 19.1M16.25 15.1 L18.7 26M16.25 15.1 L27.8 16.1"/></g>
<circle cx="16.25" cy="15.1" r="5.4" fill="#F4F2EF"/>
<g fill="#6B3300"><circle cx="16.25" cy="15.1" r="4.4"/><circle cx="22.7" cy="3" r="2.4"/><circle cx="7.7" cy="7" r="2.3"/><circle cx="3.7" cy="19.1" r="2.5"/><circle cx="18.7" cy="26" r="2.4"/><circle cx="27.8" cy="16.1" r="2.4"/></g></svg>
<span class="t" style="left:293.10px;top:170px;font-size:12px;line-height:14px;letter-spacing:-0.288px;">Bizományos kezelés</span>
<div class="vsep" style="left:404px;top:135px;width:2px;height:50px;"></div>
<svg style="left:448px;top:137px" width="32" height="32" viewBox="0 0 32 32" ><path d="M1.7 1.2 Q4 0.6 6.4 1.2 H25.2 Q30 1.8 28.8 6.6 L23.8 25.2 H8.6 L6.6 28 Q3.2 27.8 3.9 24 L9 5.6 Q9.6 3.6 7.4 3.9 H1.7 Z" fill="#6B3300"/>
<path d="M12 3.5 H24.6 Q27 3.7 26.2 6.4 L21.9 23 H7.2 Z" fill="#FFFDF8"/>
<path d="M8.7 26.5 H29.9 L28.2 29.7 H6.6 Z" fill="#6B3300"/>
<g stroke="#4A2A0A" stroke-width="1.5"><path d="M14.1 4.9H23.9M13.1 8.85H23M12.2 12.8H22M11.25 16.8H20.9M10.1 20.8H19.9"/></g></svg>
<span class="t" style="left:449.70px;top:170px;font-size:12px;line-height:14px;letter-spacing:-0.139px;">Leltár</span>
<svg style="left:523px;top:158px" width="7" height="4" viewBox="0 0 7 4" ><path d="M0 0H7L3.5 3.8Z" fill="#000"/></svg>
<div class="vsep" style="left:538px;top:135px;width:2px;height:50px;"></div>
<svg style="left:582px;top:137px" width="32" height="32" viewBox="0 0 32 32" ><path d="M14.9 1.3 Q15.9 0.8 16.9 1.3 L30.2 7.3 Q30.9 7.7 30.9 8.5 V22.7 Q30.9 23.5 30.2 23.9 L16.9 29.4 Q15.9 29.9 14.9 29.4 L1.9 23.6 Q1.2 23.2 1.2 22.4 V8.6 Q1.2 7.8 1.9 7.4 Z" fill="#6B3300"/>
<path d="M8 10.3 L22 3.4 L23.4 4.3 L10.3 10.9 V15.4 L8 14.2 Z" fill="#FFF8EC"/>
<g fill="#FFF8EC"><path d="M20.7 14.9 L22.6 18.4 H21.4 V22.4 L20 23 V18.4 H18.9 Z"/><path d="M27 11.8 L28.8 15.4 H27.7 V20 L26.3 20.6 V15.4 H25 Z"/></g>
<path d="M18 25.8 L29 21.3" stroke="#FFF8EC" stroke-width="0.9"/></svg>
<span class="t" style="left:581.90px;top:170px;font-size:12px;line-height:14px;letter-spacing:-0.366px;">Egyéb</span>
<svg style="left:657px;top:158px" width="7" height="4" viewBox="0 0 7 4" ><path d="M0 0H7L3.5 3.8Z" fill="#000"/></svg>
<div class="vsep" style="left:672px;top:135px;width:2px;height:50px;"></div>
<div class="gg" style="left:175px;top:200px;width:755px;height:43px;"></div>
<div class="gt" style="left:738px;top:191px;width:192px;height:17px;">
<span class="t" style="left:10.80px;top:-1px;font-size:13px;line-height:15px;font-weight:bold;color:#404040;letter-spacing:-0.090px;">Nyitókészlet</span>
</div>
<div class="btn def" style="left:186px;top:215px;width:147px;height:23px;">
<div style="left:3px;top:3px;width:139px;height:15px;border:1px dotted #000"></div>
<span class="t" style="left:33.65px;top:4px;font-size:11px;line-height:12px;letter-spacing:0.099px;"><u>N</u>yitókészlet (+)</span>
</div>
<div class="btn" style="left:381px;top:215px;width:147px;height:23px;">
<span class="t" style="left:19.75px;top:4px;font-size:11px;line-height:12px;letter-spacing:-0.064px;"><u>N</u>yitókészlet vissza (-)</span>
</div>
<div class="btn" style="left:575px;top:215px;width:147px;height:23px;">
<span class="t" style="left:25.50px;top:4px;font-size:11px;line-height:12px;font-style:italic;letter-spacing:-0.072px;">Nyitókészlet kereső</span>
</div>
<div class="btn" style="left:770px;top:215px;width:147px;height:23px;">
<span class="t" style="left:9.40px;top:4px;font-size:11px;line-height:12px;font-style:italic;letter-spacing:-0.108px;">Nyitókészlet vissza kereső</span>
</div>
<div class="gy" style="left:175px;top:257px;width:756px;height:47px;"></div>
<div class="gty" style="left:738px;top:249px;width:193px;height:17px;">
<span class="t" style="left:10.80px;top:-1px;font-size:13px;line-height:15px;font-weight:bold;color:#404040;letter-spacing:-0.087px;">Selejtezés</span>
</div>
<div class="btn" style="left:186px;top:273px;width:147px;height:23px;">
<span class="t" style="left:39.90px;top:4px;font-size:11px;line-height:12px;letter-spacing:0.029px;"><u>S</u>elejtezés (-)</span>
</div>
<div class="btn" style="left:770px;top:273px;width:147px;height:23px;">
<span class="t" style="left:29.80px;top:4px;font-size:11px;line-height:12px;font-style:italic;letter-spacing:-0.084px;">Selejtezés kereső</span>
</div>
<div class="gg" style="left:175px;top:320px;width:755px;height:43px;"></div>
<div class="gt" style="left:738px;top:309px;width:192px;height:17px;">
<span class="t" style="left:10.80px;top:-1px;font-size:13px;line-height:15px;font-weight:bold;color:#404040;letter-spacing:-0.122px;">Raktárközi mozgás</span>
</div>
<div class="btn" style="left:186px;top:333px;width:147px;height:23px;">
<span class="t" style="left:27.40px;top:4px;font-size:11px;line-height:12px;letter-spacing:-0.197px;"><u>R</u>aktárközi mozgás</span>
</div>
<div class="btn" style="left:770px;top:333px;width:147px;height:23px;">
<span class="t" style="left:29.40px;top:4px;font-size:11px;line-height:12px;font-style:italic;letter-spacing:-0.109px;">Raktárközi kereső</span>
</div>
<div class="gy" style="left:175px;top:377px;width:756px;height:58px;"></div>
<div class="gty" style="left:738px;top:369px;width:193px;height:17px;">
<span class="t" style="left:10.80px;top:-1px;font-size:13px;line-height:15px;font-weight:bold;color:#404040;letter-spacing:-0.141px;">Leltározás</span>
</div>
<span class="t" style="left:193.10px;top:386px;font-size:11px;line-height:12px;letter-spacing:-0.054px;">A leltározási műveletek a 'Leltár' gomb alatt találhatók.</span>
<div class="btn" style="left:186px;top:405px;width:147px;height:23px;">
<span class="t" style="left:31.90px;top:4px;font-size:11px;line-height:12px;letter-spacing:0.226px;">Leltár<u>t</u>öbblet (+)</span>
</div>
<div class="btn" style="left:381px;top:405px;width:147px;height:23px;">
<span class="t" style="left:37.80px;top:4px;font-size:11px;line-height:12px;letter-spacing:0.103px;">Leltár<u>h</u>iány (-)</span>
</div>
<div class="btn" style="left:575px;top:405px;width:147px;height:23px;">
<span class="t" style="left:23.80px;top:4px;font-size:11px;line-height:12px;font-style:italic;letter-spacing:0.039px;">Leltártöbblet kereső</span>
</div>
<div class="btn" style="left:770px;top:405px;width:147px;height:23px;">
<span class="t" style="left:27.65px;top:4px;font-size:11px;line-height:12px;font-style:italic;letter-spacing:-0.011px;">Leltárhiány kereső</span>
</div>
<div class="gg" style="left:175px;top:450px;width:755px;height:45px;"></div>
<div class="gt" style="left:738px;top:441px;width:192px;height:17px;">
<span class="t" style="left:10.80px;top:-1px;font-size:13px;line-height:15px;font-weight:bold;color:#404040;letter-spacing:-0.211px;">Dolgozói készletmozgás</span>
</div>
<div class="btn" style="left:186px;top:465px;width:147px;height:23px;">
<span class="t" style="left:20.50px;top:4px;font-size:11px;line-height:12px;letter-spacing:-0.143px;"><u>D</u>olgozónak kiadás (-)</span>
</div>
<div class="btn" style="left:381px;top:465px;width:147px;height:23px;">
<span class="t" style="left:21.65px;top:4px;font-size:11px;line-height:12px;letter-spacing:-0.034px;">Dolgozótól <u>v</u>issza (+)</span>
</div>
<div class="btn" style="left:575px;top:465px;width:147px;height:23px;">
<span class="t" style="left:15.25px;top:4px;font-size:11px;line-height:12px;letter-spacing:-0.018px;"><u>D</u>olgozótól kivezetés (-)</span>
</div>
<div class="btn" style="left:770px;top:465px;width:147px;height:23px;">
<span class="t" style="left:23.40px;top:4px;font-size:11px;line-height:12px;font-style:italic;letter-spacing:-0.135px;">Dolgozói bizonylatok</span>
</div>
<div class="gy" style="left:175px;top:511px;width:756px;height:53px;"></div>
<div class="gty" style="left:738px;top:503px;width:193px;height:17px;">
<span class="t" style="left:10.80px;top:-1px;font-size:13px;line-height:15px;font-weight:bold;color:#404040;letter-spacing:-0.368px;">Belső felhasználás</span>
</div>
<div class="btn" style="left:186px;top:531px;width:147px;height:23px;">
<span class="t" style="left:21.10px;top:4px;font-size:11px;line-height:12px;letter-spacing:-0.136px;"><u>B</u>első felhasználás (-)</span>
</div>
<div class="btn" style="left:381px;top:531px;width:147px;height:23px;">
<span class="t" style="left:21.65px;top:4px;font-size:11px;line-height:12px;"><u>B</u>első felh. vissza (+)</span>
</div>
<div class="btn" style="left:575px;top:531px;width:147px;height:23px;">
<span class="t" style="left:29.10px;top:4px;font-size:11px;line-height:12px;font-style:italic;letter-spacing:-0.035px;">Belső felh. kereső</span>
</div>
<div class="btn" style="left:770px;top:531px;width:147px;height:23px;">
<span class="t" style="left:13.40px;top:4px;font-size:11px;line-height:12px;font-style:italic;letter-spacing:-0.114px;">Belső felh. vissza kereső</span>
</div>
<div class="btn" style="left:186px;top:587px;width:147px;height:23px;">
<span class="t dis" style="left:27.90px;top:4px;font-size:11px;line-height:12px;letter-spacing:-0.038px;">Készlet exportálás</span>
</div>
<span class="t" style="left:349.20px;top:592px;font-size:11px;line-height:12px;letter-spacing:-0.177px;">Cikk készleteinek exportálása MS Excel-be (normál, bizományi) - részletesen az Egyéb menüben</span>
</main>
<footer id="statusbar" class="sec">
<div style="left:0px;top:749px;width:1366px;height:3px;background:#FAFAFA"></div>
<div class="sunk1" style="left:1px;top:752px;width:560px;height:14px;">
</div>
<div class="sunk1" style="left:563px;top:752px;width:131px;height:14px;">
<span class="t" style="left:2.40px;top:1px;font-size:11px;line-height:12px;letter-spacing:-0.237px;">ACTUAL bemutató cég</span>
</div>
<div class="sunk1" style="left:697px;top:752px;width:198px;height:14px;">
</div>
<div class="sunk1" style="left:898px;top:752px;width:198px;height:14px;">
<span class="t" style="left:3.40px;top:1px;font-size:11px;line-height:12px;letter-spacing:-0.203px;">\ACTUAL.Kronos0001 (2.1.61) RTM</span>
</div>
<div class="sunk1" style="left:1099px;top:752px;width:118px;height:14px;">
<span class="t" style="left:2.10px;top:1px;font-size:11px;line-height:12px;letter-spacing:-0.100px;">Adminisztrátor</span>
</div>
<div class="sunk1" style="left:1220px;top:752px;width:78px;height:14px;">
<span class="t" style="left:7.40px;top:1px;font-size:11px;line-height:12px;letter-spacing:0.098px;">2017.01.09.</span>
</div>
<div class="sunk1" style="left:1301px;top:752px;width:45px;height:14px;">
<span class="t" style="left:9.40px;top:1px;font-size:11px;line-height:12px;letter-spacing:0.445px;">9:10</span>
</div>
<div style="left:0px;top:766px;width:1366px;height:2px;background:#C8B48A"></div>
<div style="left:51px;top:766px;width:59px;height:2px;background:#EFE6CF"></div>
<div style="left:113px;top:766px;width:59px;height:2px;background:#EFE6CF"></div>
<div style="left:175px;top:766px;width:59px;height:2px;background:#FFFFFF"></div>
</footer>
</body>
</html>
